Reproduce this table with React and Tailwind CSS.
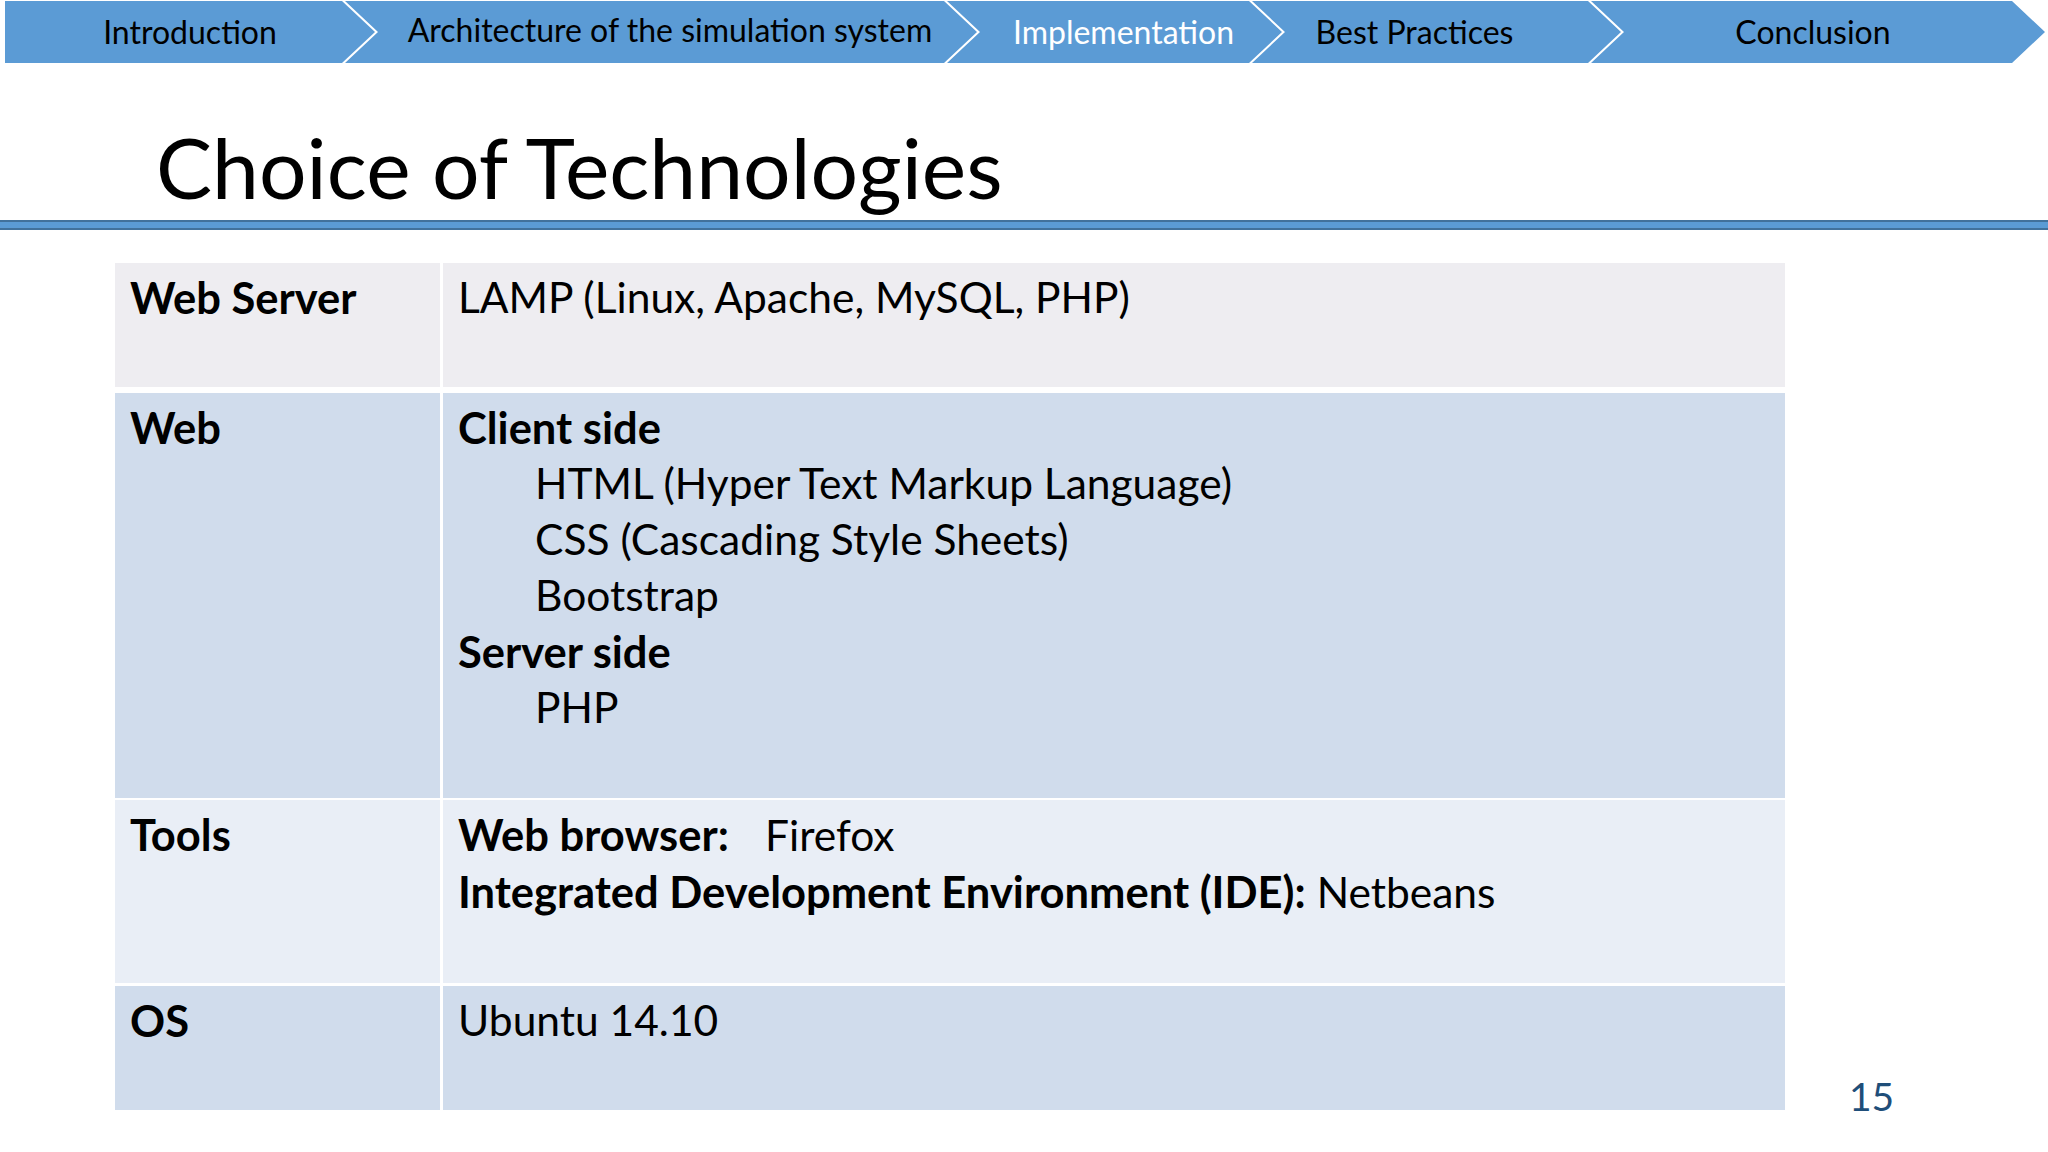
const notch =
  "[clip-path:polygon(0_0,calc(100%_-_33px)_0,100%_50%,calc(100%_-_33px)_100%,0_100%,33px_50%)]";
const flat =
  "[clip-path:polygon(0_0,calc(100%_-_33px)_0,100%_50%,calc(100%_-_33px)_100%,0_100%)]";

const steps = [
  { label: "Introduction", box: "w-[370px]", clip: flat, pad: "pl-[0px]", color: "text-black" },
  { label: "Architecture of the simulation system", box: "w-[632px] -ml-[30px]", clip: notch, pad: "pl-[18px] pb-[4px]", color: "text-black" },
  { label: "Implementation", box: "w-[335px] -ml-[30px]", clip: notch, pad: "pl-[18px]", color: "text-white" },
  { label: "Best Practices", box: "w-[369px] -ml-[30px]", clip: notch, pad: "pr-[44px]", color: "text-black" },
  { label: "Conclusion", box: "w-[454px] -ml-[30px]", clip: notch, pad: "pr-[10px]", color: "text-black" },
];

const Row = ({ bg, size, left, children }) => (
  <div className={`flex gap-[3px] ${size}`}>
    <div className={`w-[325px] shrink-0 ${bg} pl-[15px] pt-[6px] text-[43.5px] font-bold`}>{left}</div>
    <div className={`flex-1 ${bg} pl-[15px] pt-[6px]`}>{children}</div>
  </div>
);

export default function App() {
  return (
    <div className="w-[2048px] h-[1152px] overflow-hidden bg-white font-['Lato',sans-serif] text-black">
      <nav className="flex pl-[5px] pt-[1px]">
        {steps.map((s) => (
          <div
            key={s.label}
            className={`flex h-[62px] items-center justify-center bg-[#5b9bd5] text-[32px] leading-none ${s.box} ${s.clip} ${s.pad} ${s.color}`}
          >
            {s.label}
          </div>
        ))}
      </nav>

      <h1 className="mt-[56px] pl-[156px] text-[84px] leading-[96px] font-normal">
        Choice of Technologies
      </h1>
      <div className="mt-[5px] h-[10px] border-y-2 border-[#41719c] bg-[#5b9bd5]" />

      <div className="mt-[33px] flex items-end pl-[115px]">
        <div className="flex w-[1670px] flex-col text-[42.5px] leading-[56px]">
          <Row bg="bg-[#eeedf1]" size="h-[124px]" left="Web Server">
            LAMP (Linux, Apache, MySQL, PHP)
          </Row>
          <Row bg="bg-[#d0dcec]" size="h-[405px] mt-[6px]" left="Web">
            <div className="text-[43.5px] font-bold">Client side</div>
            <div className="pl-[77px]">HTML (Hyper Text Markup Language)</div>
            <div className="pl-[77px]">CSS (Cascading Style Sheets)</div>
            <div className="pl-[77px]">Bootstrap</div>
            <div className="text-[43.5px] font-bold">Server side</div>
            <div className="pl-[77px]">PHP</div>
          </Row>
          <Row bg="bg-[#e9eef6]" size="h-[183px] mt-[2px]" left="Tools">
            <div>
              <span className="inline-block w-[307px] text-[43.5px] font-bold">Web browser:</span>
              Firefox
            </div>
            <div>
              <span className="text-[43.5px] font-bold">Integrated Development Environment (IDE):</span> Netbeans
            </div>
          </Row>
          <Row bg="bg-[#d0dcec]" size="h-[124px] mt-[3px]" left="OS">
            Ubuntu 14.10
          </Row>
        </div>
        <div className="ml-[64px] -mb-[10px] text-[39px] leading-[48px] text-[#1f4e79]">15</div>
      </div>
    </div>
  );
}
